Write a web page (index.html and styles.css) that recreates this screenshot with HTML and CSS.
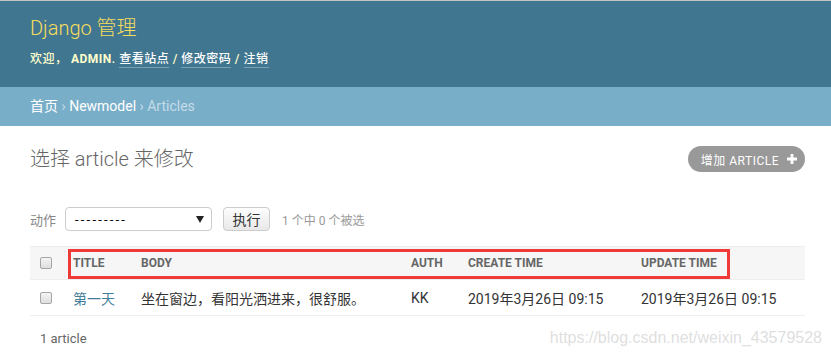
FILE: index.html
```html
<!DOCTYPE html>
<html lang="zh">
<head>
<meta charset="utf-8">
<title>选择 article 来修改 | Django 站点管理员</title>
<link rel="stylesheet" href="styles.css">
</head>
<body>
<div class="header">
  <div class="brand">Django 管理</div>
  <div class="user-tools">欢迎， <strong>ADMIN</strong>. <a href="#">查看站点</a> / <a href="#">修改密码</a> / <a href="#">注销</a></div>
</div>
<div class="breadcrumbs"><a href="#">首页</a> › <a href="#">Newmodel</a> › Articles</div>
<div class="content">
  <div class="title-row">
    <h1>选择 article 来修改</h1>
    <a class="addlink" href="#">增加 ARTICLE<svg class="plus" viewBox="0 0 10 10" width="10" height="10"><path d="M3.6 0h2.8v3.6H10v2.8H6.4V10H3.6V6.4H0V3.6h3.6z" fill="#fff"/></svg></a>
  </div>
  <div class="actions">
    <span class="label">动作</span>
    <div class="select"><span>---------</span><svg class="arrow" viewBox="0 0 8 7" width="8" height="7"><path d="M0 0h8L4 7z" fill="#222"/></svg></div>
    <button class="go" type="button">执行</button>
    <span class="counter">1 个中 0 个被选</span>
  </div>
  <div class="results">
    <table>
      <colgroup>
        <col class="c-chk"><col class="c-title"><col class="c-body"><col class="c-auth"><col class="c-create"><col class="c-update">
      </colgroup>
      <thead>
        <tr>
          <th class="chk"><span class="box"></span></th>
          <th>Title</th>
          <th>Body</th>
          <th>Auth</th>
          <th>Create time</th>
          <th>Update time</th>
        </tr>
      </thead>
      <tbody>
        <tr>
          <td class="chk"><span class="box"></span></td>
          <td><a href="#" class="link">第一天</a></td>
          <td>坐在窗边，看阳光洒进来，很舒服。</td>
          <td>KK</td>
          <td>2019年3月26日 09:15</td>
          <td>2019年3月26日 09:15</td>
        </tr>
      </tbody>
    </table>
    <div class="highlight"></div>
  </div>
  <p class="paginator">1 article</p>
</div>
<div class="watermark">https://blog.csdn.net/weixin_43579528</div>
</body>
</html>
```
FILE: styles.css
```css
html, body {
  margin: 0;
  padding: 0;
}
body {
  position: relative;
  min-height: 358px;
  border-top: 1px solid #c4c4c4;
  font-family: Roboto, "Noto Sans CJK SC", sans-serif;
  color: #333;
  background: #fff;
}
a { text-decoration: none; }

.header {
  background: #417690;
  padding: 15px 30px 17px;
  color: #ffc;
}
.brand {
  font-size: 20px;
  font-weight: 300;
  line-height: 24px;
  color: #f5dd5d;
  margin: 0 0 8px;
}
.user-tools {
  font-size: 12px;
  letter-spacing: 0.5px;
  line-height: 22px;
  font-weight: 500;
}
.user-tools strong {
  font-weight: 700;
}
.user-tools a {
  color: #fff;
  border-bottom: 1px solid rgba(255, 255, 255, 0.3);
  line-height: 16px;
  display: inline-block;
}

.breadcrumbs {
  background: #79aec8;
  padding: 10px 30px;
  font-size: 14px;
  line-height: 19px;
  color: #c4dce8;
}
.breadcrumbs a {
  color: #fff;
}

.content {
  padding: 20px 26px 0 30px;
}
.title-row {
  display: flex;
  justify-content: space-between;
  align-items: center;
  height: 26px;
}
h1 {
  margin: 0;
  font-size: 20px;
  font-weight: 300;
  line-height: 24px;
  color: #666;
}
.addlink {
  display: flex;
  align-items: center;
  height: 26px;
  padding: 0 8px 0 13px;
  border-radius: 13px;
  background: #999;
  color: #fff;
  font-size: 12px;
  letter-spacing: 0.5px;
}
.addlink .plus {
  margin-left: 8px;
}

.actions {
  display: flex;
  align-items: center;
  height: 24px;
  margin-top: 35px;
}
.label {
  font-size: 13px;
  color: #888;
  margin-right: 9px;
}
.select {
  box-sizing: border-box;
  width: 147px;
  height: 24px;
  border: 1px solid #ccc;
  border-radius: 4px;
  display: flex;
  align-items: center;
  justify-content: space-between;
  padding: 0 7px 0 9px;
  font-size: 13px;
  color: #000;
  letter-spacing: 2.2px;
}
.go {
  box-sizing: border-box;
  height: 24px;
  width: 47px;
  margin-left: 11px;
  border: 1px solid #ccc;
  border-radius: 4px;
  background: linear-gradient(#fdfdfd, #e8e8e8);
  font-family: Roboto, "Noto Sans CJK SC", sans-serif;
  font-size: 14px;
  color: #333;
  padding: 0;
}
.counter {
  margin-left: 12px;
  font-size: 12px;
  color: #999;
}

.results {
  position: relative;
  margin-top: 15px;
}
table {
  width: 100%;
  table-layout: fixed;
  border-collapse: collapse;
}
.c-chk { width: 35px; }
.c-title { width: 68px; }
.c-body { width: 270px; }
.c-auth { width: 57px; }
.c-create { width: 173px; }
.c-update { width: 172px; }

th {
  background: #f6f6f6;
  border-top: 1px solid #eee;
  border-bottom: 1px solid #eee;
  height: 32px;
  padding: 0 8px;
  text-align: left;
  font-size: 12px;
  font-weight: 700;
  color: #666;
  text-transform: uppercase;
}
td {
  height: 35px;
  padding: 0 8px;
  border-bottom: 1px solid #eee;
  font-size: 14px;
  color: #333;
  white-space: nowrap;
}
th.chk, td.chk {
  padding: 0 0 0 10px;
}
.box {
  display: block;
  box-sizing: border-box;
  width: 12px;
  height: 12px;
  border: 1px solid #a6a6a6;
  border-radius: 2px;
  background: linear-gradient(#f4f4f4, #dedede);
}
.link {
  color: #447e9b;
}
.highlight {
  position: absolute;
  left: 38px;
  top: 3px;
  width: 662px;
  height: 30px;
  box-sizing: border-box;
  border: 3px solid #f03a3a;
}

.paginator {
  margin: 0;
  padding: 12px 0 10px 10px;
  line-height: 22px;
  font-size: 13px;
  color: #666;
}

.watermark {
  position: absolute;
  right: 9px;
  top: 328px;
  font-family: "Liberation Sans", Arial, sans-serif;
  font-size: 16px;
  color: rgba(170, 170, 170, 0.4);
}
```
